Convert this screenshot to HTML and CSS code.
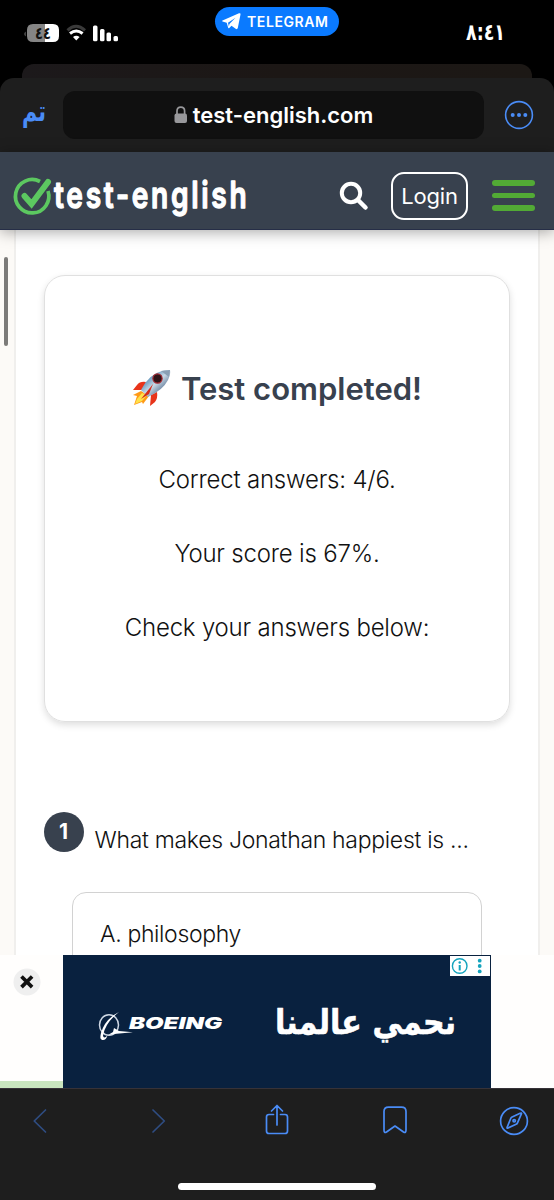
FILE: index.html
```html
<!DOCTYPE html>
<html lang="en">
<head>
<meta charset="utf-8">
<title>test-english.com</title>
<link rel="stylesheet" href="styles.css">
</head>
<body>
<div class="phone">
  <div class="status">
    <svg class="status-left" width="96" height="24" viewBox="0 0 96 24">
      <path d="M1.500 7.500v5q-2-2.500 0-5z" fill="#858585"/>
      <path d="M9 0h12v18H9q-6 0-6-6V6q0-6 6-6z" fill="#858585"/>
      <path d="M21 0h8q6 0 6 6v6q0 6-6 6h-8z" fill="#fff"/>
      <text class="ar-bold" transform="translate(19 14.500) scale(1 1.100)" x="0" y="0" font-size="15" text-anchor="middle" textLength="16" lengthAdjust="spacingAndGlyphs">٤٤</text>
      <path d="M43.500 6.300q8.500-8 17.500 0" fill="none" stroke="#3a3a3a" stroke-width="3"/>
      <path d="M46 9.500q6.300-5 12.600 0" fill="none" stroke="#fff" stroke-width="3"/>
      <path d="M49 13q3.300-2.500 6.600 0l-3.300 3.500z" fill="#fff"/>
      <g fill="#fff"><rect x="69" y="1.500" width="4.500" height="15.700" rx="1.500"/><rect x="76" y="5" width="4.500" height="12.200" rx="1.500"/><rect x="82.500" y="8.500" width="4.500" height="8.700" rx="1.500"/><rect x="89.500" y="12" width="4.500" height="5.200" rx="1.500"/></g>
    </svg>
    <div class="pill">
      <svg width="19" height="17" viewBox="0 0 19 17"><path d="M.5 7.500 17 .3q1.800-.6 1.500 1.200L15.800 15q-.6 1.800-2.100.8L9.500 12.700 7.300 15q-1 .7-1.300-.7L4.700 9.700.5 8.500q-.8-.6 0-1z" fill="#fff"/><path d="M6 9.700 13.500 4.700 7.400 11 6.900 13.500z" fill="#0a7aff"/></svg>
      <span>TELEGRAM</span>
    </div>
    <svg class="clock" width="42" height="26" viewBox="0 0 42 26"><text transform="translate(1 18.500) scale(1 1.150)" x="0" y="0" font-size="20" textLength="39" lengthAdjust="spacingAndGlyphs" direction="ltr">&#x202D;٨:٤١</text></svg>
  </div>
  <div class="back-sheet"></div>
  <div class="urlbar">
    <svg class="done" width="26" height="28" viewBox="0 0 26 28"><text transform="translate(1 19) scale(1 1.300)" x="0" y="0" font-size="22" textLength="24" lengthAdjust="spacingAndGlyphs">تم</text></svg>
    <div class="address">
      <svg width="14" height="18" viewBox="0 0 14 18"><rect x=".5" y="7.500" width="12.500" height="9.500" rx="2" fill="#98989b"/><path d="M3 8V5q0-3.800 3.800-3.800T10.600 5v3" fill="none" stroke="#98989b" stroke-width="1.700"/></svg>
      <span>test-english.com</span>
    </div>
    <svg class="more" width="30" height="30" viewBox="0 0 30 30" fill="#4a8cf6"><circle cx="15" cy="15" r="13.400" fill="none" stroke="#4a8cf6" stroke-width="1.600"/><circle cx="8.700" cy="15" r="2"/><circle cx="15" cy="15" r="2"/><circle cx="21.300" cy="15" r="2"/></svg>
  </div>
  <header class="site-head">
    <svg class="logo" width="236" height="50" viewBox="0 0 236 50">
      <g fill="none" stroke="#5cc860"><path d="M28 5.500A16.700 16.700 0 1 0 36 15" stroke-width="3.700"/><path d="M12.500 20 19.500 28 36 6" stroke-width="6" stroke-linecap="round"/></g>
      <text class="logo-text" transform="translate(42 31.500) scale(.76 1)" x="0" y="0" font-size="37">test-english</text>
    </svg>
    <svg class="search" width="30" height="30" viewBox="0 0 30 30" fill="none" stroke="#fff"><circle cx="12" cy="12" r="9.200" stroke-width="4"/><path d="m19 19 7.500 7.500" stroke-width="4.500" stroke-linecap="round"/></svg>
    <div class="login">Login</div>
    <div class="burger"><i></i><i></i><i></i></div>
  </header>
  <main class="page">
    <div class="column">
      <section class="result">
        <h1>
          <svg width="40" height="38" viewBox="0 0 40 38">
            <defs><linearGradient id="hull" x1="0" y1="0" x2="1" y2="1"><stop offset="0.200" stop-color="#3f7fae"/><stop offset=".5" stop-color="#c8d9e6"/><stop offset=".8" stop-color="#4d6788"/></linearGradient></defs>
            <path d="M14 13Q8 12 5 16L1 21 11 21zM25 23q1 6-2 10l-5 4 1-11z" fill="#e8341a"/>
            <path d="M9 22 1 26l4 1-3 9 8-3 1 2 6-8z" fill="#ff9a17"/>
            <path d="m10 24-5 6-2 5 7-3 5-6z" fill="#ffe24a"/>
            <path d="M9 21Q17 5 30 2q7-1 8-1 1 3-2 10Q31 21 16 28z" fill="url(#hull)"/>
            <path d="M29 2q8-1 9-1 0 2-1 7z" fill="#8aa0b4"/>
            <circle cx="25.500" cy="9.500" r="4.600" fill="#2e1418" stroke="#a5252c" stroke-width="1.200"/>
            <path d="M21 15 9 30l8-5z" fill="#d42c1c"/>
          </svg>
          <span>Test completed!</span>
        </h1>
        <p class="r1">Correct answers: 4/6.</p>
        <p class="r2">Your score is 67%.</p>
        <p class="r3">Check your answers below:</p>
      </section>
      <div class="question"><b>1</b><span>What makes Jonathan happiest is ...</span></div>
      <div class="option"><span>A. philosophy</span></div>
    </div>
    <div class="scrollbar"></div>
    <div class="ad-strip">
      <div class="ad-side"><svg class="close" width="28" height="28" viewBox="0 0 28 28"><circle cx="14" cy="14" r="13.500" fill="#efefef"/><path d="m8.500 8.500 10.600 10.600M19.100 8.500 8.500 19.100" stroke="#111" stroke-width="3.700"/></svg></div>
      <div class="ad">
        <svg width="428" height="133" viewBox="0 0 428 133">
          <g fill="none" stroke="#cfd8e4"><ellipse cx="46" cy="70" rx="9.500" ry="10.300" stroke-width="1.500"/></g>
          <path d="M56 57Q42 64 38 78q-2 8 2 7 3 0 4.500-4.500-4 4-4.500 0Q42 68 56 57zM51 73l5 3 14 1.300L51 79l-6 1 5-3z" fill="#fff"/>
          <text class="boeing" x="66" y="73.500" font-size="16" textLength="93" lengthAdjust="spacingAndGlyphs">BOEING</text>
          <text class="slogan" transform="translate(212 78.500) scale(1 1.120)" x="0" y="0" font-size="31" textLength="181" lengthAdjust="spacingAndGlyphs">نحمي عالمنا</text>
          <rect x="387" y="1" width="40" height="20" fill="#fff"/>
          <g fill="#14a3bd"><circle cx="396.700" cy="11" r="7.300" fill="none" stroke="#14a3bd" stroke-width="1.400"/><rect x="395.700" y="10" width="2" height="5.500"/><circle cx="396.700" cy="7.500" r="1.200"/><circle cx="416.700" cy="5.700" r="1.900"/><circle cx="416.700" cy="11" r="1.900"/><circle cx="416.700" cy="16.400" r="1.900"/></g>
        </svg>
      </div>
    </div>
  </main>
  <footer class="toolbar">
    <nav>
      <svg width="30" height="34" viewBox="0 0 30 34"><path d="M19.500 6 8.200 17l11.300 11" stroke="#2f4d82"/></svg>
      <svg width="30" height="34" viewBox="0 0 30 34"><path d="M9 6l11.300 11L9 28" stroke="#2f4d82"/></svg>
      <svg width="30" height="34" viewBox="0 0 30 34"><path d="M11.500 10.500H7q-2.500 0-2.500 2.500v14q0 2.500 2.500 2.500h16q2.500 0 2.500-2.500V13q0-2.500-2.500-2.500h-4.500M15 21V2M9.500 7 15 1.500 20.500 7"/></svg>
      <svg width="30" height="34" viewBox="0 0 30 34"><path d="M4 26V7.500Q4 3.200 8.500 3.200h13Q26 3.200 26 7.500V26q0 3.500-2.500 2L15 22 6.500 28Q4 29.500 4 26z"/></svg>
      <svg width="30" height="34" viewBox="0 0 30 34"><circle cx="15" cy="17" r="13.400"/><path d="m22.500 9.700-4 9.200q-.4 1-1.400 1.400l-8 3.700q-1.500.7-.9-.9l3.500-8.600q.4-1 1.400-1.500l8-3.800q1.600-.6 1.400.5z"/><circle cx="15.200" cy="16.800" r="1.200"/></svg>
    </nav>
    <div class="home"></div>
  </footer>
</div>
</body>
</html>
```
FILE: styles.css
```css
* { box-sizing: border-box; }
body { margin: 0; background: #000; font-family: Inter, "DejaVu Sans", sans-serif; }
svg { display: block; flex: none; overflow: visible; }
.phone { width: 554px; height: 1200px; display: flex; flex-direction: column; overflow: hidden; }
.phone > * { flex: none; }

.status { height: 64px; display: flex; align-items: flex-start; }
.status-left { margin: 24px 0 0 24px; }
.ar-bold { font-family: "DejaVu Sans", sans-serif; font-weight: 700; fill: #111; }
.pill { margin: 7px 0 0 95px; width: 124px; height: 29px; border-radius: 15px; background: #0a7aff; color: #fff; display: flex; align-items: center; padding-left: 7px; gap: 6px; font-size: 14px; font-weight: 600; letter-spacing: .6px; white-space: nowrap; }
.clock { margin: 21px 0 0 126px; }
.clock text { font-family: "DejaVu Sans", sans-serif; font-weight: 700; fill: #fff; }

.back-sheet { height: 14px; margin: 0 22px; border-radius: 12px 12px 0 0; background: linear-gradient(90deg, #1c191b, #1c1715 50%, #1c1815); }
.urlbar { height: 74px; background: #1e1e1e; border-radius: 14px 14px 0 0; display: flex; align-items: flex-start; }
.done { margin: 24px 0 0 21px; }
.done text { font-family: "DejaVu Sans", sans-serif; font-weight: 700; fill: #4a8cf6; }
.address { margin: 13px 0 0 16px; width: 421px; height: 48px; border-radius: 12px; background: #101010; display: flex; justify-content: center; align-items: center; gap: 5px; color: #fff; font-size: 22px; font-weight: 600; letter-spacing: 0; }
.more { margin: 22px 0 0 20px; }

.site-head { height: 78px; background: #38414e; border-bottom: 1px solid #262e47; box-shadow: 0 2px 14px rgba(0,0,0,.35); display: flex; position: relative; z-index: 1; }
.logo { margin: 24px 0 0 12px; }
.logo-text { font-family: Inter, sans-serif; font-weight: 600; letter-spacing: 3.550px; fill: #fff; stroke: #fff; stroke-width: 1.300; stroke-linejoin: round; }
.search { margin: 29px 0 0 91px; }
.login { margin: 20px 0 0 22px; width: 77px; height: 48px; border: 2.500px solid #fff; border-radius: 13px; color: #fff; font-size: 22px; line-height: 45px; text-align: center; letter-spacing: -.2px; }
.burger { margin: 28px 0 0 24px; width: 43px; display: flex; flex-direction: column; gap: 7px; }
.burger i { height: 5.700px; border-radius: 3px; background: #52aa35; }

.page { height: 858px; position: relative; background: #fcfaf7; padding: 0 14px; overflow: hidden; }
.column { height: 858px; background: #fff; border: solid #f0efed; border-width: 0 2px; padding: 45px 28px 0; }
.result { height: 447px; border: 1px solid #e0e0e0; border-radius: 21px; box-shadow: 0 3px 7px rgba(0,0,0,.13); padding-top: 92px; display: flex; flex-direction: column; align-items: center; color: #111; }
.result h1 { margin: -1px 0 0; height: 42px; display: flex; align-items: center; gap: 9px; font-size: 31px; font-weight: 600; letter-spacing: 0; color: #38414e; }
.result p { margin: 0; font-size: 24px; font-weight: 300; line-height: 30px; letter-spacing: -.2px; white-space: nowrap; }
.result .r1 { margin-top: 56px; }
.result .r2 { margin-top: 44px; }
.result .r3 { margin-top: 44px; }
.question { margin-top: 90px; height: 80px; display: flex; gap: 11px; color: #111; font-size: 23px; font-weight: 300; line-height: 30px; white-space: nowrap; letter-spacing: -.3px; }
.question b { margin-left: -.5px; width: 40px; height: 40px; border-radius: 50%; background: #38414e; color: #fff; font-size: 21px; font-weight: 700; line-height: 39px; text-align: center; flex: none; }
.question span { margin-top: 13px; }
.option { margin: 0 28px; height: 180px; border: 1px solid #d2d2d2; border-radius: 14px; padding: 26px 27px; color: #111; font-size: 23px; font-weight: 300; line-height: 30px; letter-spacing: -.35px; }
.scrollbar { position: absolute; left: 4px; top: 27px; width: 4px; height: 89px; border-radius: 2px; background: #7c7b79; }
.ad-strip { position: absolute; left: 0; bottom: 0; width: 554px; height: 133px; background: #fffefd; display: flex; }
.ad-side { width: 63px; border-bottom: 7px solid #c9e5bf; }
.close { margin: 13px 0 0 13px; }
.ad { width: 428px; background: #09213f; }
.boeing { font-family: Inter, sans-serif; font-weight: 900; font-style: italic; fill: #fff; }
.slogan { font-family: "DejaVu Sans", sans-serif; font-weight: 700; fill: #fff; stroke: #fff; stroke-width: .5; stroke-linejoin: round; }

.toolbar { height: 112px; background: #1e1e1e; border-top: 1px solid #363238; display: flex; flex-direction: column; align-items: center; }
.toolbar nav { width: 503px; height: 94px; padding-top: 15px; display: flex; justify-content: space-between; }
.toolbar nav svg { fill: none; stroke: #4a8cf6; stroke-width: 1.700; stroke-linecap: round; stroke-linejoin: round; }
.home { width: 198px; height: 7px; border-radius: 4px; background: #fff; }
```
